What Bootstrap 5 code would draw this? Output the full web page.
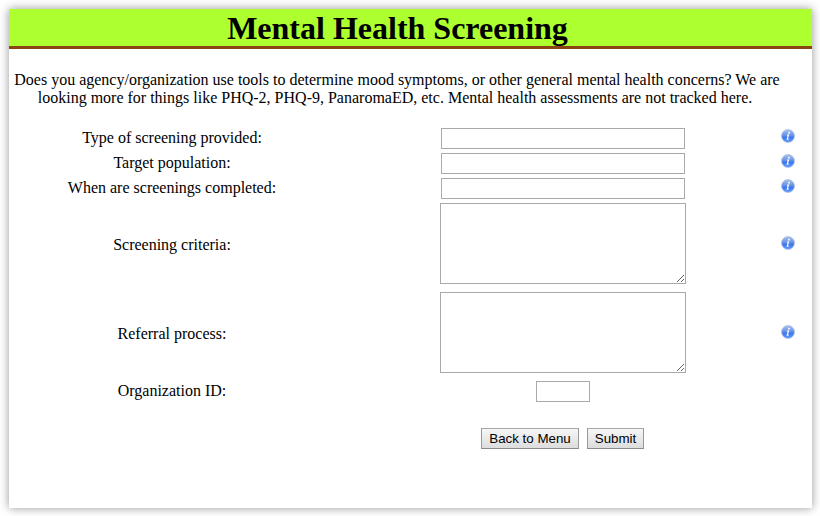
<!DOCTYPE html>
<html lang="en">
<head>
<meta charset="utf-8">
<title>Mental Health Screening</title>
<link href="https://cdn.jsdelivr.net/npm/bootstrap@5.3.0/dist/css/bootstrap.min.css" rel="stylesheet">
<style>
body{background:#fff;color:#000;font:16px/18px "Liberation Serif","Times New Roman",serif;padding:9px 8px 8px 9px;height:516px;overflow:hidden}
.panel{height:499px;box-shadow:0 0 9px rgba(0,0,0,.42);background:#fff}
.panel-title{height:40px;background:#adff2f;border-bottom:3px solid #8b4513;font-size:32px;line-height:37px;padding:1px 26px 0 0}
.intro{margin:22px 32px 0 5px;padding:0}
.fields{margin-top:21px}
.line{display:grid;grid-template-columns:326px 10px 436px 14px;align-items:center;justify-items:center}
.line>*{grid-row:1}
.line label{grid-column:1;line-height:18px;padding-bottom:1px}
.line.tall label{padding:3px 0 0}
.line .form-control{grid-column:3;border:1px solid #a9a9a9;border-radius:0;padding:1px;width:244px;height:21px;min-height:0;font:13px "Liberation Sans",Arial,sans-serif;color:#000}
.line textarea.form-control{width:246px;height:81px;min-height:0;resize:both}
.line .form-control.short{width:54px}
.line svg{grid-column:4;margin-bottom:5px}
.line.tall svg{margin-bottom:1px}
.push{margin-top:8px}
.actions{margin:26px 0 0 472px;gap:8px}
.actions .btn{height:21px;padding:0;border:1px solid #999;border-color:#a6a6a6 #999 #8b8b8b;border-radius:0;background:linear-gradient(#f6f6f6,#dddddd);color:#000;font:13.333px/19px "Liberation Sans",Arial,sans-serif}
.back{width:98px}.send{width:57px}
</style>
<script src="https://cdn.jsdelivr.net/npm/bootstrap@5.3.0/dist/js/bootstrap.bundle.min.js"></script>
</head>
<body>
<svg width="0" height="0" class="position-absolute" aria-hidden="true">
<defs><linearGradient id="blue" x1="0" y1="0" x2="0" y2="1"><stop offset="0" stop-color="#a9c0ee"/><stop offset=".45" stop-color="#6793e6"/><stop offset=".6" stop-color="#3c76ef"/><stop offset="1" stop-color="#62a0ff"/></linearGradient></defs>
<symbol id="info" viewBox="0 0 14 14"><circle cx="7" cy="7" r="6.5" fill="url(#blue)" stroke="#b4c4e6" stroke-width=".9"/><circle cx="8" cy="3.7" r=".95" fill="#fff"/><path d="M5.9 6H7.5L6.3 10.2H7.6" fill="none" stroke="#fff" stroke-width="1.2"/></symbol>
</svg>
<main class="panel">
<h1 class="panel-title fw-bold text-center m-0">Mental Health Screening</h1>
<p class="intro text-center">Does you agency/organization use tools to determine mood symptoms, or other general mental health concerns? We are<br><span class="pe-1">looking more for things like PHQ-2, PHQ-9, PanaromaED, etc. Mental health assessments are not tracked here.</span></p>
<form class="fields d-flex flex-column">
<div class="line"><label for="type">Type of screening provided:</label><input id="type" class="form-control"><svg width="14" height="14"><use href="#info"/></svg></div>
<div class="line mt-1"><label for="target">Target population:</label><input id="target" class="form-control"><svg width="14" height="14"><use href="#info"/></svg></div>
<div class="line mt-1"><label for="when">When are screenings completed:</label><input id="when" class="form-control"><svg width="14" height="14"><use href="#info"/></svg></div>
<div class="line tall mt-1"><label for="criteria">Screening criteria:</label><textarea id="criteria" class="form-control"></textarea><svg width="14" height="14"><use href="#info"/></svg></div>
<div class="line tall push"><label for="referral">Referral process:</label><textarea id="referral" class="form-control"></textarea><svg width="14" height="14"><use href="#info"/></svg></div>
<div class="line push"><label for="org">Organization ID:</label><input id="org" class="form-control short"></div>
<div class="actions d-flex"><button type="button" class="btn back">Back to Menu</button><button type="button" class="btn send">Submit</button></div>
</form>
</main>
</body>
</html>
